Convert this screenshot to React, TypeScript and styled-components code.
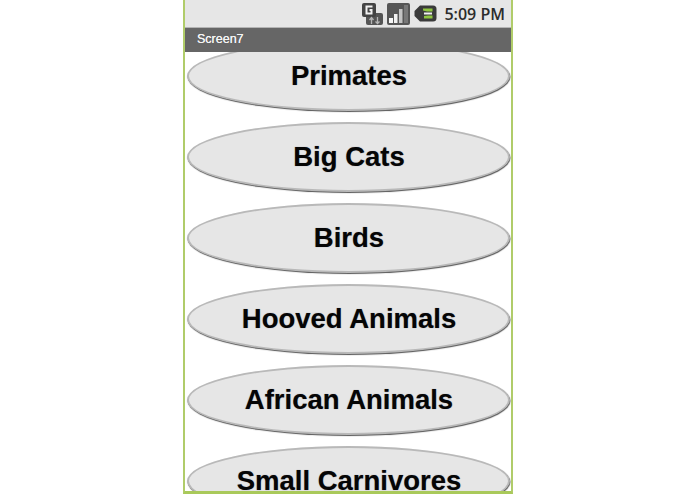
import React, { FC } from 'react';
import styled, { createGlobalStyle } from 'styled-components';

const GlobalStyle = createGlobalStyle`
  html, body {
    margin: 0;
    padding: 0;
    height: 100%;
    background: #ffffff;
    overflow: hidden;
  }
`;

const Page = styled.div`
  display: flex;
  justify-content: center;
  height: 494px;
  padding-left: 1px;
  box-sizing: border-box;
`;

const Phone = styled.div`
  width: 330px;
  height: 494px;
  box-sizing: border-box;
  display: flex;
  flex-direction: column;
  overflow: hidden;
  border-left: 2.5px solid #b0cc6a;
  border-right: 2px solid #b0cc6a;
  border-bottom: 3px solid #a9c95a;
`;

const StatusBar = styled.div`
  flex: none;
  height: 27px;
  display: flex;
  align-items: center;
  justify-content: flex-end;
  padding-right: 6px;
  background: #e6e6e6;
`;

const IconSlot = styled.span`
  display: flex;
  margin-right: 4px;
`;

const Clock = styled.span`
  margin-left: 3px;
  font: 600 16px 'Open Sans', 'Liberation Sans', sans-serif;
  color: #2c2c2c;
  white-space: nowrap;
`;

const TitleBar = styled.div`
  flex: none;
  height: 25px;
  display: flex;
  align-items: center;
  padding: 0 0 2px 12px;
  background: #666666;
  border-top: 1px solid #b4b4b4;
  box-sizing: border-box;
  font: 12.5px 'Liberation Sans', Arial, sans-serif;
  color: #f5f5f5;
  text-shadow: 0 0 0.5px #f5f5f5;
`;

const ButtonList = styled.div`
  flex: 1;
  min-height: 0;
  overflow: hidden;
`;

const Track = styled.div`
  display: flex;
  flex-direction: column;
  gap: 11px;
  margin-top: -11px;
  padding: 0 1.5px;
`;

const OvalButton = styled.div`
  flex: none;
  height: 70px;
  box-sizing: border-box;
  display: flex;
  align-items: center;
  justify-content: center;
  padding: 0.5px 0 0 2px;
  border-radius: 50%;
  background: #e6e6e6;
  border: 2px solid #b9b9b9;
  box-shadow: 0.5px 1px 1px #555555;
  font: bold 27.5px 'Liberation Sans', Arial, sans-serif;
  color: #050505;
  text-shadow: 0 0 1px rgba(0, 0, 40, 0.45);
  white-space: nowrap;
`;

const NetworkIcon: FC = () => (
  <svg width="21" height="23" viewBox="0 0 21 23">
    <rect x="4" y="11" width="17" height="12" rx="2" fill="#555555" />
    <rect x="0" y="1" width="14" height="14" rx="2" fill="#444444" />
    <path d="M10.500 4.500H4.500V11.500H9.500V8H7.500" fill="none" stroke="#f2f2f2" strokeWidth="2" />
    <path d="M9.500 22V16M7.500 18l2-2.500 2 2.500" fill="none" stroke="#b5b5b5" strokeWidth="1.300" />
    <path d="M15.500 15V21.500M13.500 19.500l2 2 2-2" fill="none" stroke="#b5b5b5" strokeWidth="1.300" />
  </svg>
);

const SignalIcon: FC = () => (
  <svg width="23" height="22" viewBox="0 0 23 22">
    <rect x="0" y="0" width="23" height="22" rx="2" fill="#565656" />
    <rect x="2" y="15" width="4" height="5" fill="#f6f6f6" />
    <rect x="7" y="11" width="3.500" height="9" fill="#f0f0f0" />
    <rect x="12" y="6" width="3.500" height="14" fill="#c4c4c4" />
    <rect x="17" y="2" width="4" height="18" fill="#787878" />
  </svg>
);

const BatteryIcon: FC = () => (
  <svg width="23" height="17" viewBox="0 0 23 17">
    <path d="M6 0.500H19Q22.500 0.500 22.500 4V13Q22.500 16.500 19 16.500H6L0.500 11V6Z" fill="#3a3a3a" />
    <path d="M9 3.500H18.500V6.500H13L9 5.500Z" fill="#8fc641" />
    <path d="M10 13.500H18.500V10.500H14L10 11Z" fill="#8fc641" />
    <path d="M10 7.500H18V9.500H10Z" fill="#f0f0f0" />
  </svg>
);

const labels = [
  'Primates',
  'Big Cats',
  'Birds',
  'Hooved Animals',
  'African Animals',
  'Small Carnivores',
];

export default function App() {
  return (
    <Page>
      <GlobalStyle />
      <Phone>
        <StatusBar>
          <IconSlot>
            <NetworkIcon />
          </IconSlot>
          <IconSlot>
            <SignalIcon />
          </IconSlot>
          <IconSlot>
            <BatteryIcon />
          </IconSlot>
          <Clock>5:09 PM</Clock>
        </StatusBar>
        <TitleBar>Screen7</TitleBar>
        <ButtonList>
          <Track>
            {labels.map(label => (
              <OvalButton key={label}>{label}</OvalButton>
            ))}
          </Track>
        </ButtonList>
      </Phone>
    </Page>
  );
}
